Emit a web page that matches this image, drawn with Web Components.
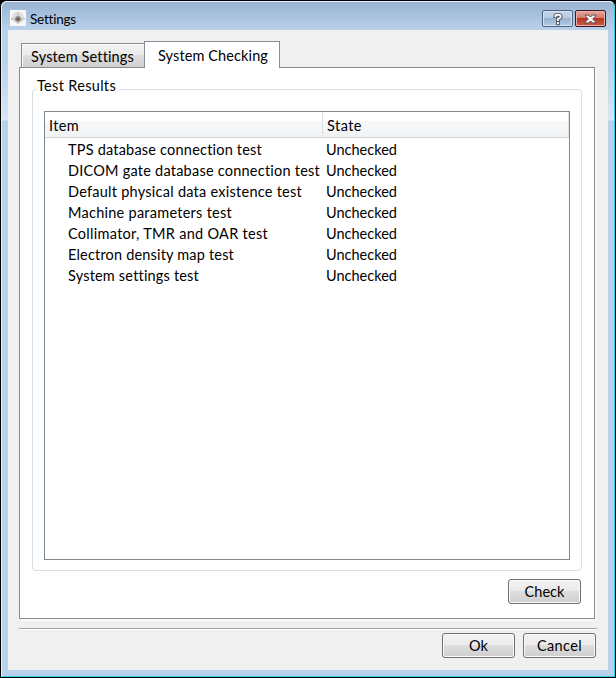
<!DOCTYPE html>
<html lang="en"><head><meta charset="utf-8"><title>Settings</title>
<style>html,body{margin:0;height:678px;overflow:hidden;background:#000}body{font:14.5px Lato,"Liberation Sans",sans-serif;color:#000}</style></head>
<body>
<settings-window></settings-window>
<script>
class Base extends HTMLElement{
  constructor(){super();this.attachShadow({mode:'open'}).innerHTML='<style>*{box-sizing:border-box}:host{box-sizing:border-box}'+this.css()+'</style>'+this.html();}
  css(){return ''} html(){return '<slot></slot>'}
}
/* A single-line label whose letter spacing is tuned to a given width. */
customElements.define('fit-text',class extends Base{
  css(){return ':host{display:inline-block;white-space:pre;line-height:20px}span{display:inline-block}'}
  html(){return '<span><slot></slot></span>'}
  connectedCallback(){
    const w=+this.getAttribute('w'),s=this.shadowRoot.querySelector('span'),n=this.textContent.length;
    this.style.width=w+'px';
    s.style.letterSpacing='0.001px';
    const d=(w-s.getBoundingClientRect().width)/n;
    s.style.letterSpacing=d+'px';
  }
});
customElements.define('push-button',class extends Base{
  css(){return `:host{display:flex;align-items:center;justify-content:center;width:73px;height:25px;border:1px solid #707070;border-radius:3px;background:linear-gradient(#f2f2f2,#ebebeb 48%,#dddddd 50%,#cfcfcf);box-shadow:inset 0 0 0 1px #fafafa}`}
});
customElements.define('caption-button',class extends Base{
  css(){return `:host{display:flex;align-items:center;justify-content:center;width:31px;height:17px;border:1px solid #4f6079;border-radius:2px;background:linear-gradient(#c3d4e7,#b7cbe3 48%,#98b2d0 50%,#b4cae4);box-shadow:inset 0 0 0 1px #d6e4f3}
:host([kind=close]){border-color:#43131f;background:linear-gradient(#e2a99f,#d4776a 48%,#b8371f 50%,#c9604a);box-shadow:inset 0 0 0 1px #e5b3a9}`}
});
customElements.define('tab-label',class extends Base{
  css(){return `:host{display:block;width:123px;height:24px;padding:3px 0 0 9px;border:1px solid #898c95;border-right:0;border-bottom:0;background:linear-gradient(#f2f2f2,#ebebeb 48%,#dddddd 50%,#cfcfcf);box-shadow:inset 1px 1px #fafafa}
:host([active]){width:136px;height:27px;padding:4px 0 0 13px;border-right:1px solid #898c95;background:#fff;margin-bottom:-1px;box-shadow:none}`}
});
customElements.define('group-box',class extends Base{
  css(){return `:host{display:block;width:550px;height:482px;border:1px solid #d5dfe5;border-radius:4px;padding:21px 11px 0}header{width:83px;height:20px;margin:-35px 0 15px -8px;background:#fff;padding-left:1px;}`}
  html(){return '<header><slot name="title"></slot></header><slot></slot>'}
});
customElements.define('list-row',class extends Base{
  css(){return `:host{display:grid;grid-template-columns:258px 1fr;height:21px;padding-left:23px}`}
});
customElements.define('list-header',class extends Base{
  css(){return `:host{display:grid;grid-template-columns:278px 1fr;height:26px;background:linear-gradient(#fff 0 9px,#f7f8fa 9px,#f1f2f4);border-bottom:1px solid #d5d5d5}div{padding:4px 0 0 4px;border-right:1px solid #dedfe1}`}
  html(){return '<div><slot name="a"></slot></div><div><slot name="b"></slot></div>'}
});
customElements.define('list-view',class extends Base{
  css(){return `:host{display:block;width:526px;height:449px;border:1px solid #828790;background:#fff}section{padding-top:2px}`}
  html(){
    const rows=[['TPS database connection test',194],['DICOM gate database connection test',252],['Default physical data existence test',234],['Machine parameters test',164],['Collimator, TMR and OAR test',200],['Electron density map test',166],['System settings test',131]];
    return '<list-header><fit-text slot="a" w="30">Item</fit-text><fit-text slot="b" w="35">State</fit-text></list-header><section>'+rows.map(([t,w])=>`<list-row><fit-text w="${w}">${t}</fit-text><fit-text w="71">Unchecked</fit-text></list-row>`).join('')+'</section>';
  }
});
customElements.define('settings-window',class extends Base{
  css(){return `
:host{display:block;width:616px;height:678px;border:1px solid #000;border-radius:7px 7px 0 0;background:#b9d1ea}
.frame{height:676px;border-radius:6px 6px 0 0;border:1px solid #e8f2fb;border-right-color:#28d2ee;border-bottom-color:#28d2ee;padding:0 6px;background:linear-gradient(#98b4d2,#b9d1ea 28px,#b9d1ea 60px,#d8e6f5 118px,#b9d1ea 119px)}
.title{display:flex;height:28px;align-items:flex-start}
.title svg.app{margin:8px 4px 0 2px;flex:none}
.title fit-text{margin-top:7px;font-size:13.5px}
.caps{display:flex;gap:2px;margin:8px 2px 0 auto}
.client{height:640px;background:#f0f0f0;padding:11px 11px 0}
.tabs{display:flex;align-items:flex-end;height:26px;padding-left:2px;position:relative}
.pane{width:576px;height:552px;border:1px solid #898c95;background:#fff;box-shadow:2px 2px #fafafa;padding:21px 12px 0}
.act{display:flex;justify-content:flex-end;padding:8px 1px 0 0}
hr{width:578px;height:2px;border:0;border-top:1px solid #a0a0a0;background:#fff;margin:9px 0 0}
.foot{display:flex;justify-content:flex-end;gap:8px;margin-top:3px;padding-right:1px}`}
  html(){return `<div class="frame"><div class="title">
<svg class="app" width="16" height="16"><path fill="#f7f7f7" d="M0 0h16v16H0z"/><circle cx="8" cy="7.5" r="6" fill="#dededc"/><path d="M1 9h14" stroke="#c7c7c5" stroke-width="2"/><circle cx="8" cy="9" r="3" fill="#96928c"/><circle cx="8" cy="9" r="1.6" fill="#62594f"/><path d="M8 3v3M8 12v2" stroke="#b4b4b4"/></svg>
<fit-text w="46">Settings</fit-text>
<div class="caps"><caption-button><svg width="12" height="14" viewBox="0 0 12 14"><g fill="none" stroke-linecap="square"><path d="M3.3 4.2Q3.3 2.8 6 2.8T8.7 4.7Q8.7 6 6 7v1M6 11v.4" stroke="#4a505c" stroke-width="3.7"/><path d="M3.3 4.2Q3.3 2.8 6 2.8T8.7 4.7Q8.7 6 6 7v1M6 11v.4" stroke="#f7f7f7" stroke-width="1.9"/></g></svg></caption-button>
<caption-button kind="close"><svg width="13" height="12" viewBox="0 0 13 12"><path d="M1.5 2h3l2 2 2-2h3v1.3L8.7 6l2.8 2.7V10h-3l-2-2-2 2h-3V8.7L4.3 6 1.5 3.3z" fill="#f6f6f6" stroke="#4c4a58"/></svg></caption-button></div></div>
<div class="client"><div class="tabs"><tab-label><fit-text w="103">System Settings</fit-text></tab-label><tab-label active><fit-text w="110">System Checking</fit-text></tab-label></div>
<div class="pane"><group-box><fit-text slot="title" w="79">Test Results</fit-text><list-view></list-view></group-box><div class="act"><push-button><fit-text w="40">Check</fit-text></push-button></div></div>
<hr><div class="foot"><push-button><fit-text w="19">Ok</fit-text></push-button><push-button><fit-text w="45">Cancel</fit-text></push-button></div></div></div>`}
});
</script></body></html>
